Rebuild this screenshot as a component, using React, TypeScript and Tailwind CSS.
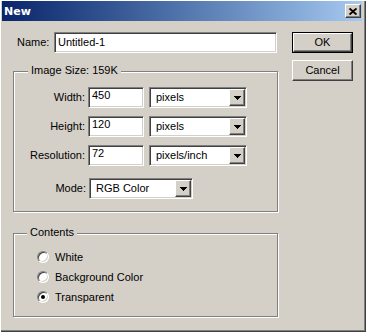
import React from 'react';

const sunken =
  'border border-t-[#808080] border-l-[#808080] border-b-white border-r-white shadow-[inset_1px_1px_0_#404040,inset_-1px_-1px_0_#d4d0c8]';
const raised =
  'border border-t-white border-l-white border-b-[#404040] border-r-[#404040] shadow-[inset_-1px_-1px_0_#808080]';
const etched = 'relative border border-[#808080] shadow-[inset_1px_1px_0_#fff,1px_1px_0_#fff]';

function Arrow() {
  return (
    <svg width="7" height="4" viewBox="0 0 7 4" shapeRendering="crispEdges">
      <rect x="0" y="0" width="7" height="1" fill="#000" />
      <rect x="1" y="1" width="5" height="1" fill="#000" />
      <rect x="2" y="2" width="3" height="1" fill="#000" />
      <rect x="3" y="3" width="1" height="1" fill="#000" />
    </svg>
  );
}

function Select({ value, className }: { value: string; className: string }) {
  return (
    <div className={`${className} h-[21px] flex bg-white p-[1px] ${sunken}`}>
      <span className="flex-1 flex items-center pl-[5px]">{value}</span>
      <div className={`w-[16px] flex items-center justify-center bg-[#d4d0c8] ${raised}`}>
        <Arrow />
      </div>
    </div>
  );
}

function Field({ label, value, unit }: { label: string; value: string; unit?: string }) {
  return (
    <div className="flex items-center h-[21px]">
      <span className="w-[74px] text-right pr-[3px]">{label}</span>
      <div className={`w-[56px] h-[21px] bg-white pl-[3px] pt-[1px] ${sunken}`}>{value}</div>
      {unit && <Select value={unit} className="w-[98px] ml-[5px]" />}
    </div>
  );
}

function Radio({ label, checked }: { label: string; checked?: boolean }) {
  return (
    <div className="flex items-center h-[20px]">
      <div className="w-[12px] h-[12px] rounded-full bg-white border border-t-[#808080] border-l-[#808080] border-b-white border-r-white shadow-[inset_1px_1px_0_#404040,inset_-1px_-1px_0_#d4d0c8] flex items-center justify-center">
        {checked && <div className="w-[4px] h-[4px] rounded-full bg-black" />}
      </div>
      <span className="ml-[6px]">{label}</span>
    </div>
  );
}

export default function App() {
  return (
    <div className="w-[366px] h-[332px] bg-[#d4d0c8] flex flex-col text-[11px] leading-[13px] text-black font-['Liberation_Sans',Arial,sans-serif] shadow-[inset_1px_1px_0_#fff,inset_-1px_-1px_0_#404040,inset_-2px_-2px_0_#808080]">
      {/* title bar */}
      <div className="mt-[1px] ml-[2px] mr-[4px] h-[20px] flex items-center bg-linear-to-r from-[#0a246a] to-[#a6caf0]">
        <span className="ml-[2px] text-white font-bold font-['DejaVu_Sans',sans-serif] text-[11px]">New</span>
        <div className={`ml-auto mr-[1px] w-[16px] h-[14px] bg-[#d4d0c8] flex items-center justify-center ${raised}`}>
          <svg width="8" height="7" viewBox="0 0 8 7">
            <path d="M0.5 0.5 L7.5 6.5 M7.5 0.5 L0.5 6.5" stroke="#000" strokeWidth="1.9" />
          </svg>
        </div>
      </div>

      <div className="flex pl-[13px] pt-[11px]">
        {/* left column */}
        <div className="w-[265px] flex flex-col">
          <div className="flex items-center h-[21px]">
            <span className="w-[41px] pl-[4px]">Name:</span>
            <div className={`w-[223px] h-[21px] bg-white flex items-center pl-[3px] ${sunken}`}>Untitled-1</div>
          </div>

          <div className={`mt-[18px] h-[141px] pt-[15px] ${etched}`}>
            <span className="absolute top-[-8px] left-[14px] px-[3px] bg-[#d4d0c8]">Image Size: 159K</span>
            <div className="flex flex-col gap-[8px]">
              <Field label="Width:" value="450" unit="pixels" />
              <Field label="Height:" value="120" unit="pixels" />
              <Field label="Resolution:" value="72" unit="pixels/inch" />
            </div>
            <div className="flex items-center h-[21px] mt-[12px]">
              <span className="w-[75px] text-right pr-[3px]">Mode:</span>
              <Select value="RGB Color" className="w-[104px]" />
            </div>
          </div>

          <div className={`mt-[21px] h-[84px] pt-[13px] pl-[23px] ${etched}`}>
            <span className="absolute top-[-8px] left-[13px] px-[3px] bg-[#d4d0c8]">Contents</span>
            <Radio label="White" />
            <Radio label="Background Color" />
            <Radio label="Transparent" checked />
          </div>
        </div>

        {/* buttons */}
        <div className="ml-[14px] flex flex-col gap-[7px]">
          <div className="w-[61px] h-[21px] border border-black">
            <div className={`w-full h-full flex items-center justify-center ${raised}`}>OK</div>
          </div>
          <div className={`w-[61px] h-[21px] flex items-center justify-center ${raised}`}>Cancel</div>
        </div>
      </div>
    </div>
  );
}
